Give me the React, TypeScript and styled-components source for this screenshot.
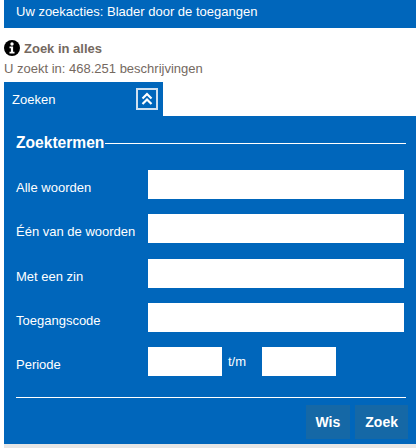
import React from "react";
import styled, { createGlobalStyle } from "styled-components";

const Global = createGlobalStyle`
  html, body { margin: 0; padding: 0; background: #fff; overflow: hidden; }
  body { font-family: "Liberation Sans", Arial, sans-serif; font-size: 13px; }
`;
const Page = styled.div`
  width: 416px; height: 448px; padding-left: 4px; box-sizing: border-box;
  display: flex; flex-direction: column; background: #fff;
`;
const TopBar = styled.div`
  height: 28px; background: #0066bb; color: #fff; display: flex; align-items: center;
  padding: 0 0 6px 12px; box-sizing: border-box; font-size: 13px;
`;
const Heading = styled.div`
  margin-top: 12px; display: flex; align-items: center; gap: 4px;
  height: 16px; color: #75695f; font-weight: bold; font-size: 13px;
`;
const Sub = styled.div`
  margin-top: 5px; height: 16px; line-height: 16px; color: #75695f; font-size: 13px;
`;
const Tab = styled.div`
  margin-top: 5px; width: 159px; height: 34px; background: #0066bb; color: #fff;
  display: flex; align-items: center; justify-content: space-between;
  padding: 0 5px 0 8px; box-sizing: border-box;
`;
const Toggle = styled.div`
  width: 22px; height: 22px; box-sizing: border-box; border: 2px solid #cfe0f0;
  display: flex; align-items: center; justify-content: center;
`;
const Panel = styled.div`
  background: #0066bb; height: 328px; padding: 16px 12px 0; box-sizing: border-box; color: #fff;
  display: flex; flex-direction: column;
`;
const Legend = styled.div`
  display: flex; align-items: center; height: 22px; font-weight: bold; font-size: 15.6px;
  margin-right: -2px;
  &::after { content: ""; flex: 1; height: 1px; background: #fff; margin-left: 1px; }
`;
const Row = styled.div<{ $mt?: number }>`
  display: flex; align-items: center; height: 29px; margin-top: ${p => p.$mt ?? 15}px;
`;
const Label = styled.label`
  width: 132px; flex: none; font-size: 13px; position: relative; top: 3px;
`;
const Field = styled.input`
  flex: 1; min-width: 0; height: 29px; border: 0; padding: 0; background: #fff; box-sizing: border-box;
`;
const ShortField = styled(Field)`
  flex: none; width: 74px;
`;
const Until = styled.span`
  width: 40px; padding-left: 6px; box-sizing: border-box; font-size: 13px;
`;
const Rule = styled.div`
  height: 1px; background: #fff; margin-top: 21px; margin-right: -2px;
`;
const Actions = styled.div`
  display: flex; justify-content: flex-end; gap: 5px; margin-top: 7px; margin-right: -4px;
`;
const Button = styled.button`
  height: 34px; padding: 0 10px; border: 0; background: #1568a6; color: #fff;
  font: bold 14px "Liberation Sans", Arial, sans-serif;
`;
const Footer = styled.div`
  height: 4px; background: #e6e6e6;
`;

export default function App() {
  return (
    <Page>
      <Global />
      <TopBar>Uw zoekacties: Blader door de toegangen</TopBar>
      <Heading>
        <svg width="16" height="16" viewBox="0 0 16 16">
          <circle cx="8" cy="8" r="8" fill="#000" />
          <circle cx="8" cy="4" r="1.7" fill="#fff" />
          <path d="M5.5 6.6h3.6v5.2h1.4v1.6h-5v-1.6h1.4V8.2H5.5z" fill="#fff" />
        </svg>
        Zoek in alles
      </Heading>
      <Sub>U zoekt in: 468.251 beschrijvingen</Sub>
      <Tab>
        Zoeken
        <Toggle>
          <svg width="14" height="14" viewBox="0 0 14 14" fill="none" stroke="#fff" strokeWidth="2.2">
            <path d="M2.5 6.5 7 2l4.5 4.5M2.5 12 7 7.5l4.5 4.5" />
          </svg>
        </Toggle>
      </Tab>
      <Panel>
        <Legend>Zoektermen</Legend>
        <Row $mt={16}><Label>Alle woorden</Label><Field /></Row>
        <Row><Label>Één van de woorden</Label><Field /></Row>
        <Row $mt={16}><Label>Met een zin</Label><Field /></Row>
        <Row><Label>Toegangscode</Label><Field /></Row>
        <Row><Label>Periode</Label><ShortField /><Until>t/m</Until><ShortField /></Row>
        <Rule />
        <Actions><Button>Wis</Button><Button>Zoek</Button></Actions>
      </Panel>
      <Footer />
    </Page>
  );
}
